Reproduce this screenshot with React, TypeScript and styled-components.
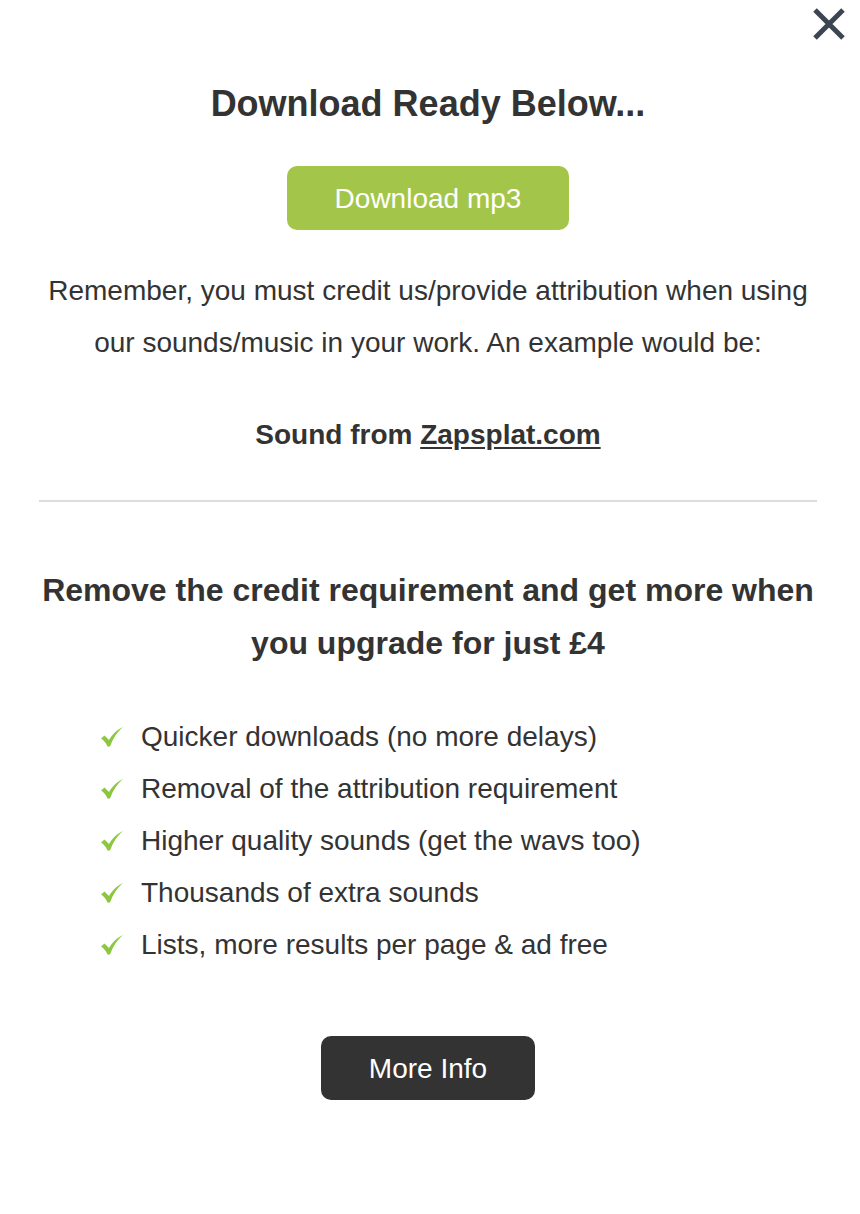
import React from "react";
import styled, { createGlobalStyle } from "styled-components";

const Global = createGlobalStyle`
  html, body { margin: 0; padding: 0; background: #fff; }
  body { font-family: "Liberation Sans", Arial, Helvetica, sans-serif; color: #333; }
  * { box-sizing: border-box; }
`;

const Modal = styled.div`
  position: relative;
  width: 860px;
  min-height: 1214px;
  padding: 82px 43px 0 39px;
  display: flex;
  flex-direction: column;
  align-items: center;
  background: #fff;
`;

const Close = styled.button`
  position: absolute;
  top: 7px;
  right: 14px;
  width: 34px;
  height: 34px;
  padding: 0;
  border: none;
  background: transparent;
  display: flex;
  align-items: center;
  justify-content: center;
  cursor: pointer;
`;

const Title = styled.h1`
  margin: 0;
  font-size: 36px;
  line-height: 43px;
  font-weight: 700;
  color: #333;
  text-align: center;
`;

const ButtonWrap = styled.div<{ $mt: number }>`
  margin-top: ${(p) => p.$mt}px;
`;

const Button = styled.a<{ $variant: "green" | "dark"; $w: number }>`
  display: flex;
  align-items: center;
  justify-content: center;
  width: ${(p) => p.$w}px;
  height: 64px;
  padding-top: 1px;
  border-radius: 10px;
  background: ${(p) => (p.$variant === "green" ? "#a3c64a" : "#333333")};
  color: #fff;
  font-size: 28px;
  text-decoration: none;
`;

const Text = styled.p<{ $mt: number; $bold?: boolean }>`
  margin: ${(p) => p.$mt}px 0 0;
  font-size: 28px;
  line-height: 52px;
  font-weight: ${(p) => (p.$bold ? 700 : 400)};
  text-align: center;
  width: 100%;
`;

const Link = styled.a`
  color: #333;
  text-decoration: underline;
  text-underline-offset: 3px;
`;

const Divider = styled.hr`
  width: 100%;
  margin: 39px 0 0;
  border: none;
  height: 2px;
  background: #dddddd;
`;

const Heading = styled.h2`
  margin: 62px 0 0;
  font-size: 32px;
  line-height: 53px;
  font-weight: 700;
  text-align: center;
  width: 100%;
`;

const List = styled.ul`
  list-style: none;
  margin: 41px 0 0;
  padding: 0 0 0 62px;
  align-self: stretch;
  display: flex;
  flex-direction: column;
`;

const Item = styled.li`
  display: flex;
  align-items: center;
  gap: 18px;
  font-size: 28px;
  line-height: 52px;
`;

const Check = () => (
  <svg width="22" height="20" viewBox="0 0 22 20" aria-hidden="true">
    <path
      d="M0 11.5 L3.5 8.5 L8 13 C11.5 7.5 15.5 3 22 0 C16.5 4.5 12 11 9 19.5 L6.5 19.5 C5 16 3 13.5 0 11.5 Z"
      fill="#8dc63f"
    />
  </svg>
);

const features = [
  "Quicker downloads (no more delays)",
  "Removal of the attribution requirement",
  "Higher quality sounds (get the wavs too)",
  "Thousands of extra sounds",
  "Lists, more results per page & ad free",
];

export default function App() {
  return (
    <>
      <Global />
      <Modal>
        <Close aria-label="Close">
          <svg width="34" height="34" viewBox="0 0 34 34">
            <path
              d="M3 3 L31 31 M31 3 L3 31"
              stroke="#3c4652"
              strokeWidth="5"
              strokeLinecap="butt"
            />
          </svg>
        </Close>
        <Title>Download Ready Below...</Title>
        <ButtonWrap $mt={41}>
          <Button $variant="green" $w={282} href="#">
            Download mp3
          </Button>
        </ButtonWrap>
        <Text $mt={35}>
          Remember, you must credit us/provide attribution when using our
          sounds/music in your work. An example would be:
        </Text>
        <Text $mt={40} $bold>
          Sound from <Link href="#">Zapsplat.com</Link>
        </Text>
        <Divider />
        <Heading>
          Remove the credit requirement and get more when you upgrade for just
          £4
        </Heading>
        <List>
          {features.map((f) => (
            <Item key={f}>
              <Check />
              <span>{f}</span>
            </Item>
          ))}
        </List>
        <ButtonWrap $mt={65}>
          <Button $variant="dark" $w={214} href="#">
            More Info
          </Button>
        </ButtonWrap>
      </Modal>
    </>
  );
}
